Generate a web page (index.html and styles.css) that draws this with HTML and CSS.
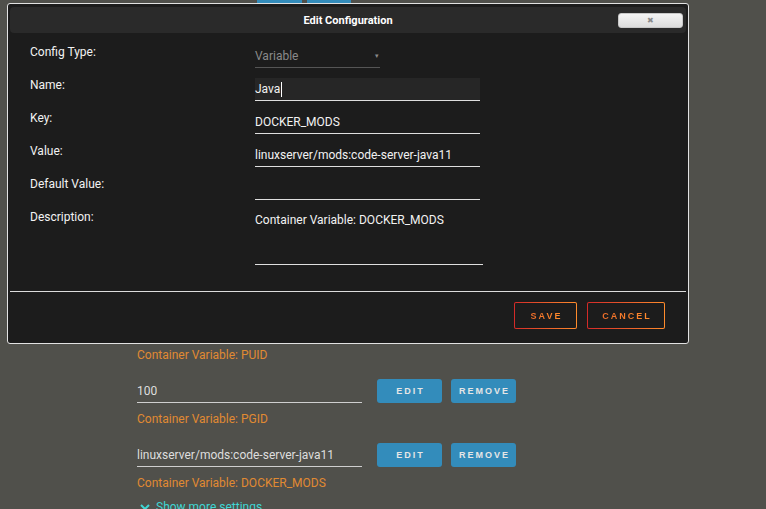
FILE: index.html
```html
<!DOCTYPE html>
<html lang="en">
<head>
    <meta charset="UTF-8">
    <meta name="viewport" content="width=device-width, initial-scale=1.0">
    <title>Edit Configuration</title>
    <link rel="stylesheet" href="styles.css">
</head>
<body>
    <div class="settings">
        <div class="peek">
            <span class="peek-btn"></span>
            <span class="peek-btn small"></span>
        </div>
        <div class="vars">
            <div class="var-desc">Container Variable: PUID</div>
            <div class="var-row">
                <div class="var-input">100</div>
                <button class="blue-btn">EDIT</button>
                <button class="blue-btn">REMOVE</button>
            </div>
            <div class="var-desc">Container Variable: PGID</div>
            <div class="var-row">
                <div class="var-input">linuxserver/mods:code-server-java11</div>
                <button class="blue-btn">EDIT</button>
                <button class="blue-btn">REMOVE</button>
            </div>
            <div class="var-desc">Container Variable: DOCKER_MODS</div>
            <div class="show-more">
                <svg width="10" height="8" viewBox="0 0 10 8"><path d="M1 2 L5 6 L9 2" fill="none" stroke="#3fd6d4" stroke-width="2"/></svg>
                <span>Show more settings</span>
            </div>
        </div>
    </div>

    <div class="dialog">
        <div class="dialog-header">
            <span class="dialog-title">Edit Configuration</span>
            <button class="close-btn">&#10006;</button>
        </div>
        <div class="form">
            <div class="form-row">
                <label>Config Type:</label>
                <div class="field select">
                    <span>Variable</span>
                    <span class="arrow">&#9662;</span>
                </div>
            </div>
            <div class="form-row">
                <label>Name:</label>
                <div class="field focused">Java<span class="caret"></span></div>
            </div>
            <div class="form-row">
                <label>Key:</label>
                <div class="field">DOCKER_MODS</div>
            </div>
            <div class="form-row">
                <label>Value:</label>
                <div class="field">linuxserver/mods:code-server-java11</div>
            </div>
            <div class="form-row">
                <label>Default Value:</label>
                <div class="field"></div>
            </div>
            <div class="form-row">
                <label>Description:</label>
                <div class="field textarea">Container Variable: DOCKER_MODS</div>
            </div>
        </div>
        <div class="separator"></div>
        <div class="actions">
            <button class="outline-btn save"><span>SAVE</span></button>
            <button class="outline-btn cancel"><span>CANCEL</span></button>
        </div>
    </div>
</body>
</html>
```

FILE: styles.css
```css
body {
    margin: 0;
    background-color: #50504b;
    font-family: Roboto, 'Liberation Sans', sans-serif;
    font-size: 12px;
    color: #f2f2f2;
    height: 509px;
    overflow: hidden;
}
.settings {
    padding-left: 137px;
}
.peek {
    display: flex;
    gap: 5px;
    height: 3px;
    padding-left: 120px;
}
.peek-btn {
    width: 45px;
    background-color: #338cbb;
}
.peek-btn.small {
    width: 44px;
}
.vars {
    margin-top: 345px;
    display: flex;
    flex-direction: column;
}
.var-desc {
    color: #e08a32;
    line-height: 14px;
    height: 14px;
}
.var-row {
    display: flex;
    align-items: flex-start;
    gap: 9px;
    margin-top: 17px;
    margin-bottom: 9px;
}
.var-input {
    width: 225px;
    height: 24px;
    line-height: 24px;
    color: #dedede;
    border-bottom: 1px solid #cfcfcf;
    box-sizing: border-box;
    margin-right: 6px;
}
.blue-btn {
    width: 65px;
    height: 24px;
    border: none;
    border-radius: 3px;
    background-color: #338cbb;
    color: #e6e6e6;
    font-family: 'Liberation Sans', Arial, sans-serif;
    font-size: 9px;
    font-weight: bold;
    letter-spacing: 2px;
    padding: 0 0 0 2px;
}
.show-more {
    display: flex;
    align-items: center;
    gap: 6px;
    margin-top: 10px;
    padding-left: 3px;
    color: #3fd6d4;
    line-height: 14px;
}

/* dialog */
.dialog {
    position: absolute;
    left: 7px;
    top: 3px;
    width: 682px;
    height: 341px;
    box-sizing: border-box;
    background-color: #1c1c1c;
    border: 1px solid #e2e2e2;
    border-radius: 3px;
    padding: 3px 2px;
}
.dialog-header {
    position: relative;
    height: 26px;
    background-color: #2a2a2a;
    border-radius: 4px;
    display: flex;
    align-items: center;
    justify-content: center;
}
.dialog-title {
    font-size: 11px;
    font-weight: bold;
    color: #ffffff;
}
.close-btn {
    position: absolute;
    right: 3px;
    top: 6px;
    width: 65px;
    height: 15px;
    padding: 0;
    border: 1px solid #c8c8c8;
    border-radius: 3px;
    background: linear-gradient(#f4f4f4, #dcdcdc);
    color: #8a8a8a;
    font-size: 8px;
    line-height: 13px;
}
.form {
    margin-top: 12px;
    padding-left: 20px;
    display: flex;
    flex-direction: column;
    gap: 10px;
}
.form-row {
    display: flex;
    align-items: flex-start;
}
.form-row label {
    width: 225px;
    line-height: 14px;
}
.field {
    width: 225px;
    height: 23px;
    box-sizing: border-box;
    line-height: 22px;
    border-bottom: 1px solid #dedede;
    color: #f2f2f2;
    white-space: nowrap;
}
.field.select {
    width: 125px;
    color: #8a8a8a;
    border-bottom-color: #555555;
    display: flex;
    justify-content: space-between;
}
.arrow {
    font-size: 7px;
    color: #8a8a8a;
    padding-right: 1px;
}
.field.focused {
    background-color: #262626;
}
.caret {
    display: inline-block;
    width: 1px;
    height: 15px;
    background-color: #ffffff;
    vertical-align: middle;
    margin-left: 1px;
}
.field.textarea {
    width: 228px;
    height: 55px;
    line-height: 20px;
}
.separator {
    margin: 26px 0 0 0;
    height: 1px;
    background-color: #dcdcdc;
}
.actions {
    display: flex;
    justify-content: flex-end;
    gap: 10px;
    margin-top: 10px;
    padding-right: 21px;
}
.outline-btn {
    height: 27px;
    padding: 0 0 0 2px;
    border: 1px solid transparent;
    border-radius: 2px;
    background: linear-gradient(#1c1c1c, #1c1c1c) padding-box,
                linear-gradient(90deg, #d42a28, #ff8c2c) border-box;
    font-family: 'Liberation Sans', Arial, sans-serif;
    font-size: 9px;
    font-weight: bold;
    letter-spacing: 2px;
    color: #f57e2a;
}
.outline-btn span {
    background: linear-gradient(90deg, #f06e2a, #ff8c2c);
    -webkit-background-clip: text;
    background-clip: text;
    color: transparent;
}
.save {
    width: 63px;
}
.cancel {
    width: 78px;
}
```
